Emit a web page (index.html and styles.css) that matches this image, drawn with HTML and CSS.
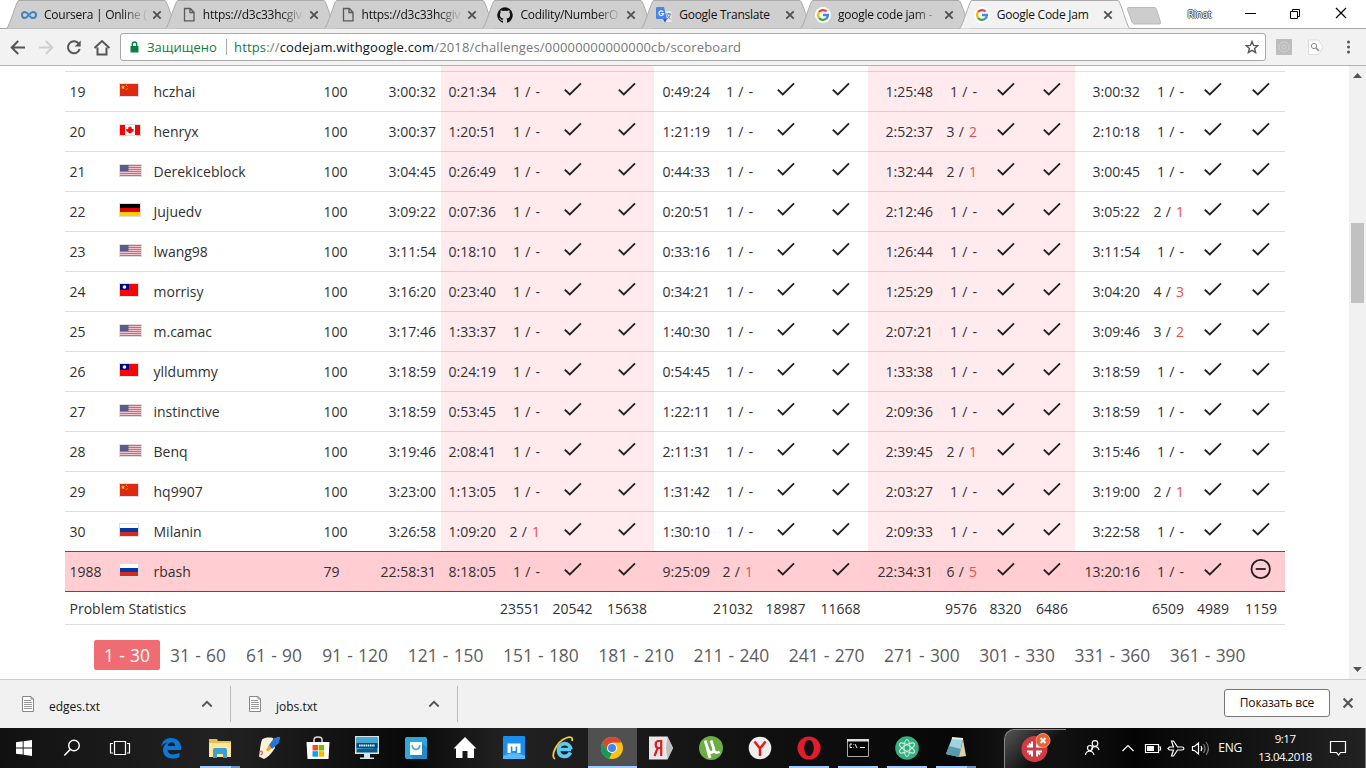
FILE: index.html
```html
<!DOCTYPE html>
<html lang="ru">
<head>
<meta charset="utf-8">
<title>Google Code Jam</title>
<link rel="stylesheet" href="styles.css">
</head>
<body>
<svg class="defs" aria-hidden="true">
  <defs>
    <symbol id="check" viewBox="0 0 24 24"><path d="M3.800 11.600l5 4.900L20 5.400" fill="none" stroke="currentColor" stroke-width="1.900"/></symbol>
    <symbol id="minus" viewBox="0 0 24 24"><circle cx="11.700" cy="11" r="9.200" fill="none" stroke="currentColor" stroke-width="1.800"/><path d="M6.700 11h10" stroke="currentColor" stroke-width="1.800"/></symbol>
    <symbol id="x" viewBox="0 0 10 10"><path d="M1.300 1.300l7.400 7.400M8.700 1.300L1.300 8.700" fill="none" stroke="currentColor" stroke-width="1.800"/></symbol>
    <symbol id="up" viewBox="0 0 12 8"><path d="M1.300 6.500L6 1.800l4.700 4.700" fill="none" stroke="currentColor" stroke-width="1.800"/></symbol>
    <symbol id="page" viewBox="0 0 16 16"><path d="M3.500 1.500h5.800l3.700 3.700v8.600H3.500zM9 1.500V5.500h4" fill="none" stroke="#5a5a5a" stroke-width="1.300"/></symbol>
    <symbol id="doc" viewBox="0 0 14 18"><path d="M1.500 1.500h8.500l2.500 2.500v12.500h-11z" fill="#fff" stroke="#888"/><path d="M10 1.500V4h2.500" fill="none" stroke="#888"/><path d="M3 5.500h7M3 7.500h8M3 9.500h8M3 11.500h8M3 13.500h8" stroke="#999" stroke-width="1"/></symbol>
    <symbol id="google" viewBox="0 0 16 16"><circle cx="8" cy="8" r="8" fill="#fff"/><g fill="none" stroke-width="2.300"><path d="M4 5.200A4.900 4.900 0 0 1 11.500 4.500" stroke="#ea4335"/><path d="M4 5.200A4.900 4.900 0 0 0 4 10.800" stroke="#fbbc05"/><path d="M4 10.800A4.900 4.900 0 0 0 11.200 11.700" stroke="#34a853"/><path d="M11.200 11.700A4.900 4.900 0 0 0 12.900 8H8" stroke="#4285f4"/></g></symbol>
    <symbol id="tabshape" viewBox="0 0 172 29" preserveAspectRatio="none"><path d="M.5 28.500C3.500 27 10 2 12.500.5H159C162 2 167 24 170.500 28.500" fill="currentColor" stroke="#aaa"/></symbol>
    <symbol id="cn" viewBox="0 0 18 12"><path fill="#de2910" d="M0 0h18v12H0z"/><path fill="#ffde00" d="M3 1.300l.6 1.200 1.400.1-1 1 .3 1.400L3 4.300l-1.300.7.3-1.400-1-1 1.400-.1zM6 .8h1v1H6zM7.300 2.300h.8v.8h-.8zM7.300 4h.8v.8h-.8zM6 5.200h.8V6H6z"/></symbol>
    <symbol id="ca" viewBox="0 0 20 10"><path fill="#fff" d="M0 0h20v10H0z"/><path fill="#f00" d="M0 0h5v10H0zM15 0h5v10h-5zM10 1l.9 1.600 1-.3-.2 1.700L14 4l-.7 1.300.4 1-2.200.9.100.7h-1.300V9h-.6V7.900H8.400l.1-.7-2.200-.9.4-1L6 4l2.300 0-.2-1.700 1 .3z"/></symbol>
    <symbol id="us" viewBox="0 0 21 11"><path fill="#f0c6cc" d="M0 0h21v11H0z"/><path d="M0 .5h21M0 2.500h21M0 4.500h21M0 6.500h21M0 8.500h21M0 10.500h21" stroke="#d0667a"/><path fill="#5b5b8d" d="M0 0h8.500v6H0z"/></symbol>
    <symbol id="de" viewBox="0 0 20 12"><path d="M0 0h20v4H0z"/><path fill="#d00" d="M0 4h20v4H0z"/><path fill="#ffce00" d="M0 8h20v4H0z"/></symbol>
    <symbol id="tw" viewBox="0 0 18 12"><path fill="#fe0000" d="M0 0h18v12H0z"/><path fill="#000095" d="M0 0h9v6H0z"/><circle cx="4.500" cy="3" r="1.800" fill="#fff"/></symbol>
    <symbol id="ru" viewBox="0 0 18 12"><path fill="#fff" d="M0 0h18v4H0z"/><path fill="#0039a6" d="M0 4h18v4H0z"/><path fill="#d52b1e" d="M0 8h18v4H0z"/></symbol>
  </defs>
</svg>

<div class="window">
  <header class="tabstrip">
    <div class="tab"><svg class="shape"><use href="#tabshape"/></svg>
      <svg class="favicon" viewBox="0 0 16 16"><path d="M8 8C6.500 6 5.500 4.900 4 4.900a3.100 3.100 0 0 0 0 6.200C6.500 11.100 9 4.900 12 4.900a3.100 3.100 0 0 1 0 6.200C10.500 11.100 9.500 10 8.600 8.800" fill="none" stroke="#3f85c6" stroke-width="2"/></svg>
      <span class="label fade">Coursera | Online (</span><svg class="close"><use href="#x"/></svg></div>
    <div class="tab"><svg class="shape"><use href="#tabshape"/></svg><svg class="favicon pg"><use href="#page"/></svg><span class="label fade">https://d3c33hcgiv</span><svg class="close"><use href="#x"/></svg></div>
    <div class="tab"><svg class="shape"><use href="#tabshape"/></svg><svg class="favicon pg"><use href="#page"/></svg><span class="label fade">https://d3c33hcgiv</span><svg class="close"><use href="#x"/></svg></div>
    <div class="tab"><svg class="shape"><use href="#tabshape"/></svg>
      <svg class="favicon" viewBox="0 0 16 16"><path fill="#111" d="M8 .2a8 8 0 0 0-2.500 15.500c.4.100.5-.1.500-.4v-1.600c-2.200.5-2.700-.9-2.700-.9-.4-1-1-1.200-1-1.200-.7-.5.1-.5.100-.5.800.1 1.200.8 1.200.8.700 1.200 1.900.9 2.400.7.100-.5.300-.9.500-1.100-1.800-.2-3.600-.9-3.600-4 0-.9.300-1.600.8-2.100-.1-.2-.4-1 .1-2.100 0 0 .7-.2 2.200.8a7.500 7.500 0 0 1 4 0c1.500-1 2.200-.8 2.200-.8.500 1.100.2 1.900.1 2.100.5.500.8 1.200.8 2.100 0 3.100-1.900 3.700-3.600 4 .3.200.5.700.5 1.500v2.300c0 .3.100.5.500.4A8 8 0 0 0 8 .2z"/></svg>
      <span class="label fade">Codility/NumberO</span><svg class="close"><use href="#x"/></svg></div>
    <div class="tab"><svg class="shape"><use href="#tabshape"/></svg>
      <svg class="favicon" viewBox="0 0 16 16"><path fill="#e8e8e8" d="M7 4h8.500v11H10z"/><path fill="#4a86e8" d="M1 0h7l3 12H1a1 1 0 0 1-1-1V1a1 1 0 0 1 1-1z"/><path fill="#2a56c6" d="M7 12h4l-2 3.500z"/><path d="M7.200 5A2.300 2.300 0 1 0 7.500 6.700H5.500" fill="none" stroke="#fff" stroke-width="1.200"/><path d="M10 7h5M12.500 6v1M11 12c2-1 3-3 3.200-5M11 8c1 2 2 3.300 3.500 4" fill="none" stroke="#5e83bf"/></svg>
      <span class="label">Google Translate</span><svg class="close"><use href="#x"/></svg></div>
    <div class="tab"><svg class="shape"><use href="#tabshape"/></svg><svg class="favicon"><use href="#google"/></svg><span class="label fade">google code jam -</span><svg class="close"><use href="#x"/></svg></div>
    <div class="tab active"><svg class="shape"><use href="#tabshape"/></svg><svg class="favicon"><use href="#google"/></svg><span class="label">Google Code Jam</span><svg class="close"><use href="#x"/></svg></div>
    <svg class="newtab" viewBox="0 0 36 18"><path d="M3 .5h25c1.500 0 2 .5 2.500 2l4 12.500c.5 1.500 0 2-1.500 2H9c-1.500 0-2.500-.5-3-2L1.500 2.500C1 1 1.500.5 3 .5z" fill="#cdcdcd" stroke="#b9b9b9"/></svg>
    <span class="user">Rinat</span>
    <svg class="winctl" viewBox="0 0 110 14"><path d="M1 6.500h11" stroke="#000"/><path d="M46.500 4.500h7v7h-7zM48.500 4.500v-2h7v7h-2" fill="none" stroke="#000"/><path d="M92 1l10 10M102 1L92 11" stroke="#000" stroke-width="1.200"/></svg>
  </header>

  <div class="toolbar">
    <svg class="nav" viewBox="0 0 112 37"><g fill="none" stroke="#555" stroke-width="2"><path d="M25 18.500H12M18.200 12L11.700 18.500l6.500 6.500"/><path d="M39 18.500h13M45.800 12l6.500 6.500-6.500 6.500" stroke="#cfcfcf"/><path d="M79 15a6 6 0 1 0 .7 5"/><path d="M94.500 19L102 12l7.500 7M97.500 18.500v7h9v-7"/></g><path fill="#555" d="M80.700 11.500v6h-6z"/></svg>
    <div class="omnibox">
      <svg class="lock" viewBox="0 0 9 12"><path fill="#0b8043" d="M0.500 5h8v6.500h-8z"/><path d="M2.300 5V3.200a2.200 2.200 0 0 1 4.400 0V5" fill="none" stroke="#0b8043" stroke-width="1.400"/></svg>
      <span class="secure">Защищено</span><i class="rule"></i>
      <span class="url"><b>https</b>://<em>codejam.withgoogle.com</em>/2018/challenges/00000000000000cb/scoreboard</span>
      <svg class="star" viewBox="0 0 14 14"><path d="M7 1.500l1.600 3.900 4.200.3-3.200 2.700 1 4.100L7 10.300l-3.600 2.200 1-4.100L1.200 5.700l4.200-.3z" fill="none" stroke="#555" stroke-width="1.400"/></svg>
    </div>
    <svg class="exts" viewBox="0 0 84 20"><path fill="#bdbdbd" d="M2 2h16v16H2z"/><circle cx="10" cy="10" r="5" fill="none" stroke="#d2d2d2"/><circle cx="10" cy="10" r="2" fill="none" stroke="#d2d2d2"/><path fill="#fff" stroke="#ddd" d="M34.500 3h10l4.500 7-4.500 7.500h-10z"/><circle cx="40" cy="9" r="2.600" fill="none" stroke="#888"/><path d="M42 11l3 3" stroke="#888" stroke-width="1.400"/><g fill="#555"><circle cx="74.500" cy="5" r="1.500"/><circle cx="74.500" cy="10" r="1.500"/><circle cx="74.500" cy="15" r="1.500"/></g></svg>
  </div>

  <main class="viewport">
    <div class="content">
      <div id="board" class="board"></div>
      <nav id="pager" class="pager"></nav>
    </div>
    <div class="scrollbar">
      <svg viewBox="0 0 9 5"><path d="M0 5L4.500 0 9 5z" fill="#555"/></svg>
      <i class="thumb"></i>
      <svg viewBox="0 0 9 5"><path d="M0 0h9L4.500 5z" fill="#555"/></svg>
    </div>
  </main>

  <div class="downloads">
    <div class="download"><svg class="doc"><use href="#doc"/></svg><span>edges.txt</span><svg class="chev"><use href="#up"/></svg></div>
    <div class="download second"><svg class="doc"><use href="#doc"/></svg><span>jobs.txt</span><svg class="chev"><use href="#up"/></svg></div>
    <button class="showall">Показать все</button>
    <svg class="dismiss"><use href="#x"/></svg>
  </div>

  <footer class="taskbar">
    <div class="sys"><svg viewBox="0 0 24 24"><path fill="#fff" d="M4 6.300l6.700-1v6.200H4zM11.600 5.200L20 4v7.500h-8.400zM4 12.400h6.700v6.200L4 17.700zM11.600 12.400H20V20l-8.400-1.200z"/></svg></div>
    <div class="sys"><svg viewBox="0 0 24 24"><circle cx="14" cy="9.500" r="5.300" fill="none" stroke="#fff" stroke-width="1.400"/><path d="M10.300 13.400L4.300 19.500" stroke="#fff" stroke-width="1.500"/></svg></div>
    <div class="sys"><svg viewBox="0 0 24 24"><path d="M6.500 5.500h11v13h-11zM5 7.500H2.500v9.500H5M19 7.500h2.500v9.500H19" fill="none" stroke="#fff" stroke-width="1.200"/></svg></div>
    <div class="app first"><svg viewBox="0 0 24 24"><path fill="#0b78d7" d="M2 11C3 5 7 2 12 2c6 0 10 4 10 9v3H8.500c.3 3 2.700 4.500 5.500 4.500 2.500 0 4.500-.5 6.500-1.700V21c-2 1-4.500 1.500-7 1.500C8 22.500 4 19 4 14c0-3.500 2-6.300 5-7.500-4 .3-6 2.500-7 4.500zm6.600-1h7.600c0-2-1.300-3.800-3.600-3.800S8.800 8 8.600 10z"/></svg></div>
    <div class="app open stacked"><svg viewBox="0 0 24 24"><path fill="#e8bf4c" d="M1 3h8l1 2h13v16H1z"/><path fill="#ffe69a" d="M1 7h22v14H1z"/><path fill="#3b9fd2" d="M5 22v-8a2 2 0 0 1 2-2h10a2 2 0 0 1 2 2v8h-4v-4H9v4z"/></svg></div>
    <div class="app"><svg viewBox="0 0 24 24"><path fill="#fff2da" d="M5 3.500C8 1.500 12 1 16 2l2 10C15 17 11 21 7 23l-5-2.500C3 15 3 9 5 3.500z"/><path fill="#f5a623" d="M9 14l3-5 4 2-5 4.500z"/><path fill="#ffd57a" d="M17 4l4-3 2 1-4 5z"/><path fill="#2775cf" d="M12 9l5-7 6-1-1 6-7 6z"/><path d="M2.500 16c3-3 4 2 1 3" fill="none" stroke="#e46262" stroke-width="1.300"/></svg></div>
    <div class="app"><svg viewBox="0 0 24 24"><path d="M8 6V3.500C8 0 16 0 16 3.500V6" fill="none" stroke="#ddd" stroke-width="1.500"/><path fill="#fff" d="M.5 6h23l-1 17h-21z"/><path fill="#f25022" d="M6.500 9H12v5.500H6.500z"/><path fill="#7fba00" d="M12.700 9h5.500v5.500h-5.500z"/><path fill="#00a4ef" d="M6.500 15.200H12v5.500H6.500z"/><path fill="#ffb900" d="M12.700 15.200h5.500v5.500h-5.500z"/></svg></div>
    <div class="app"><svg viewBox="0 0 24 24"><path fill="#d6e5e9" d="M0 0h24v18H0zM9 18h6v3.500h4V23H5v-1.500h4z"/><path fill="#075b89" d="M1.500 1.500h21v15h-21z"/><path fill="#45aad3" d="M1.500 1.500h21v10c-6 2-15 0-21 2z"/><path fill="#0c4774" d="M1.500 7h21v5h-21z"/><path d="M4 9.500h16" stroke="#ddf6fc" stroke-width="1.800" stroke-dasharray="1.600 .6"/></svg></div>
    <div class="app"><svg viewBox="0 0 24 24"><rect x="1" y="1" width="22" height="22" rx="2" fill="#2ca8dc"/><path fill="#1b8dc4" d="M18 7l5 5v11H10l-4-4z"/><path fill="#fff" d="M6 6h12v13H6z"/><path d="M8 9c1 6 7 6 8 0" fill="none" stroke="#55a9c8" stroke-width="1.600"/></svg></div>
    <div class="app"><svg viewBox="0 0 24 24"><path fill="#fff" d="M12 1l11.500 11.500H21V22h-6.500v-7h-5v7H3v-9.500H.5z"/></svg></div>
    <div class="app"><svg viewBox="0 0 24 24"><rect x="1" y="0" width="22" height="23" rx="1" fill="#198eef"/><path fill="#58b8ff" d="M1 20c7-4 15-4 22 0v3H1z"/><path d="M5.500 17V7.500h13V17h-3.300v-6.500h-1.600V15h-3.200v-4.500H8.800V17z" fill="#fff"/></svg></div>
    <div class="app"><svg viewBox="0 0 24 24"><path d="M20 13.500H8.500M19.500 16.500c-3 6-12 5-12-2.500 0-8 11-9 12.500-.5" fill="none" stroke="#5ccaf5" stroke-width="3.700"/><path d="M4 23C-1 21 5 6 15 2c5-2 7-.5 6 3" fill="none" stroke="#f3cb35" stroke-width="1.800"/></svg></div>
    <div class="app current"><svg viewBox="0 0 24 24"><circle cx="12" cy="12" r="11" fill="#fbc116"/><path fill="#db4437" d="M2.500 6.500a11 11 0 0 1 19 0H12L7.400 15z"/><path fill="#0f9d58" d="M2.500 6.500L7.400 15 12 17l-3 5.700A11 11 0 0 1 2.500 6.500z"/><circle cx="12" cy="12" r="5" fill="#fff"/><circle cx="12" cy="12" r="4" fill="#4285f4"/></svg></div>
    <div class="app"><svg viewBox="0 0 24 24"><path fill="#e8e8e8" d="M0 .5h18.500L24 12l-5.500 11.500H0z"/><path fill="#bdbdbd" d="M18.500.5L24 12l-5.500 11.500L17 12z"/><path d="M12.200 20V5H9.700c-4 0-4 7 0 7h2.500M8.700 12L5.500 20" fill="none" stroke="#e21b1b" stroke-width="2.200"/></svg></div>
    <div class="app"><svg viewBox="0 0 24 24"><circle cx="12" cy="12" r="12" fill="#6cae43"/><path d="M6 4.500l3 9c1.800 4.500 7 3.500 5.500-1.500L12 4.500M14.500 13c1 4 3.500 4.500 6 2.500M8 11.500L11 22" fill="none" stroke="#fff" stroke-width="2.800"/></svg></div>
    <div class="app"><svg viewBox="0 0 24 24"><circle cx="12" cy="12" r="11.300" fill="#eee"/><path d="M6.500 5.500L12 12.500l5.500-7M12 12v8" fill="none" stroke="#e21a1a" stroke-width="2.500"/></svg></div>
    <div class="app open"><svg viewBox="0 0 24 24"><ellipse cx="12" cy="12" rx="11.500" ry="11.500" fill="#e31b2c"/><ellipse cx="12" cy="12" rx="4.800" ry="8.300" fill="#111"/></svg></div>
    <div class="app open"><svg viewBox="0 0 24 24"><path fill="#050505" stroke="#aaa" d="M1.500 3.500h21v17h-21z"/><path fill="#ddd" d="M1 3h22v2.500H1z"/><path d="M6 8H4v3.500h2M7.500 8.500v.5m0 2v.5M9 8l2 4M14 11.500h5" fill="none" stroke="#eee"/></svg></div>
    <div class="app open"><svg viewBox="0 0 24 24"><circle cx="12" cy="12" r="11.800" fill="#37ad80"/><g fill="none" stroke="#c9f1df"><ellipse cx="12" cy="12" rx="3" ry="8.500"/><ellipse cx="12" cy="12" rx="3" ry="8.500" transform="rotate(60 12 12)"/><ellipse cx="12" cy="12" rx="3" ry="8.500" transform="rotate(-60 12 12)"/></g></svg></div>
    <div class="app open stacked"><svg viewBox="0 0 24 24"><path fill="#9fd3e0" d="M8 2l11 1-4 18-13-3z"/><path fill="#5799ad" d="M5 10l12 3-2 8-13-3z"/><path fill="#ddd2a5" d="M19 3l3 17-7 1z"/><path d="M8 2l11 1" stroke="#eee" stroke-width="2"/></svg></div>
    <div class="callout"><svg viewBox="0 0 30 30"><circle cx="13.500" cy="16" r="13" fill="#cf3c45"/><path d="M11 8.500v5H6M8 10.500l3 3M16 8.500v5h5M19 10.500l-3 3M11 23.500v-5H6M8 21.500l3-3M16 23.500v-5h5M19 21.500l-3-3" fill="none" stroke="#fff" stroke-width="2"/><circle cx="22" cy="7.500" r="7" fill="#eb6135" stroke="#f39a78"/><path d="M19.500 5l5 5M24.500 5l-5 5" stroke="#fff" stroke-width="2"/></svg></div>
    <svg class="tray" viewBox="0 0 140 40"><g fill="none" stroke="#fff" stroke-width="1.200"><circle cx="21" cy="15.500" r="2.800"/><path d="M17.500 22c.5-4.500 6.500-4.500 7.500 0"/><circle cx="16" cy="20" r="2.500"/><path d="M11.500 27c.5-5 7.500-5 8.500 0M48.500 23l5.500-5.500 5.500 5.500"/><path d="M71.500 16.500h13v8h-13zM85 19h1.500v3H85"/><path d="M94 20.500l1.500-1.500h4l-2-6h2l4 6h4.500c2.500 0 2.500 3 0 3h-4.500l-4 6h-2l2-6h-4z"/><path d="M118.500 18.500h2l4-3.500v11l-4-3.500h-2zM127 18c1 1.500 1 3.500 0 5"/><path d="M129.500 16c2 3 2 6 0 9M132 14c3 4 3 9 0 13" stroke="#777"/></g><path fill="#fff" d="M73 18h7v5h-7z"/></svg>
    <span class="lang">ENG</span>
    <div class="clock"><span>9:17</span><span>13.04.2018</span></div>
    <svg class="notify" viewBox="0 0 18 18"><path d="M1.500 2.500h15v11h-5L9.500 16l-2-2.500h-6z" fill="none" stroke="#fff" stroke-width="1.200"/></svg>
    <i class="edge"></i>
  </footer>
</div>
<script src="board.js"></script>
</body>
</html>
```
FILE: styles.css
```css
* { box-sizing: border-box; }
body { margin: 0; overflow: hidden; background: #fff; font-family: "Open Sans", "Noto Sans", sans-serif; color: #303030; }
svg { display: block; flex: none; }
.defs { position: absolute; width: 0; height: 0; }
.window { width: 1366px; height: 768px; display: flex; flex-direction: column; overflow: hidden; }

/* tabs */
.tabstrip { height: 28px; flex: none; display: flex; align-items: center; padding-left: 6px; background: #fff; position: relative; z-index: 1; }
.tab { position: relative; isolation: isolate; width: 158.8px; height: 28px; flex: none; display: flex; align-items: center; padding: 2px 4px 0 15px; color: #cfcfcf; }
.tab .shape { position: absolute; left: 0; top: 0; width: 172px; height: 29px; z-index: -1; }
.tab.active { color: #f2f2f2; }
.favicon { width: 16px; height: 16px; margin-right: 7px; }
.favicon.pg { margin: 0 6px 0 1px; }
.label { flex: 1; color: #111; font-size: 12px; letter-spacing: -.25px; line-height: 18px; white-space: nowrap; margin-right: 5px; }
.fade { -webkit-mask-image: linear-gradient(90deg, #000 76%, rgba(0,0,0,.15) 96%); mask-image: linear-gradient(90deg, #000 76%, rgba(0,0,0,.15) 96%); }
.close { width: 10px; height: 10px; color: #505050; }
.tab .close { margin-right: 1px; }
.newtab { width: 36px; height: 18px; margin: 3px 0 0 8px; }
.user { margin: 0 0 0 26px; width: 26px; font-size: 10.5px; letter-spacing: -.3px; color: #fff; text-shadow: 1px 0 #555, -1px 0 #555, 0 1px #555, 0 -1px #555; }
.winctl { width: 110px; height: 14px; margin-left: 30px; }

/* toolbar */
.toolbar { height: 38px; flex: none; display: flex; align-items: center; background: #f2f2f2; border-top: 1px solid #aaa; border-bottom: 1px solid #b3b3b3; }
.nav { width: 112px; height: 37px; }
.omnibox { margin-left: 8px; width: 1146px; height: 28px; display: flex; align-items: center; padding: 0 6px 0 9px; background: #fff; border: 1px solid #a9a9a9; border-radius: 3px; font-size: 13px; }
.lock { width: 9px; height: 12px; margin-right: 8px; }
.secure { color: #0b8043; width: 70px; white-space: nowrap; }
.rule { width: 1px; height: 16px; background: #aaa; margin: 0 7px 0 9px; }
.url { flex: 1; color: #777; letter-spacing: .16px; white-space: nowrap; }
.url b { font-weight: 400; color: #0b8043; }
.url em { font-style: normal; color: #111; }
.star { width: 14px; height: 14px; }
.exts { width: 84px; height: 20px; margin-left: 8px; }

/* page */
.viewport { height: 613px; flex: none; display: flex; overflow: hidden; }
.content { width: 1349px; padding-left: 65px; }
.board { width: 1220px; font-size: 14px; }
.row { display: grid; grid-template-columns: 49px 35px 170px 51px 71px 60px 44px 55px 54px 61px 43px 55px 55px 70px 44px 47px 46px 70px 44px 48px 48px; height: 40px; background: linear-gradient(90deg, transparent 376px, #ffebee 376px 589px, transparent 589px 803px, #ffebee 803px 1010px, transparent 1010px); border-bottom: 1px solid rgba(0,0,0,.13); }
.row.lead { height: 6px; }
.row.last { border-bottom-color: #555; }
.row.mine { background: #ffcdd2; border-bottom-color: #555; }
.row.stats { background: none; height: 33px; }
.row > span { display: flex; align-items: center; padding: 0 5px 0 4.500px; white-space: nowrap; }
.row .num { justify-content: flex-end; }
.row .tries { word-spacing: .8px; }
.row .mid { justify-content: center; padding: 0 0 4px; color: #212121; }
.row.stats .mid { padding: 0; color: inherit; }
.row .bad { font-style: normal; color: #e8504c; margin-left: 5px; }
.row .none { margin-left: 5px; }
.mark, .minus { width: 24px; height: 24px; }
.flag { border: 1px solid #ddd; margin-bottom: 3px; }
.wide2 { grid-column: span 6; }

.pager { display: flex; margin: 15px 0 0 29px; font-size: 17.4px; color: #5c5c5c; word-spacing: .7px; }
.pager span { height: 30px; display: flex; align-items: center; justify-content: center; border-radius: 2px; white-space: nowrap; }
.pager .s { width: 66px; background: #ef6c73; color: #fff; }
.pager .m { width: 76px; }
.pager .l { width: 86px; }
.pager .xl { width: 95.250px; }

.scrollbar { width: 17px; display: flex; flex-direction: column; align-items: center; justify-content: space-between; background: #f1f1f1; padding: 7px 0; }
.scrollbar svg { width: 9px; height: 5px; }
.thumb { width: 13px; height: 80px; background: #c1c1c1; margin-bottom: 220px; }

/* downloads */
.downloads { height: 49px; flex: none; display: flex; align-items: center; background: #f1f1f1; border-top: 1px solid #ccc; font-size: 12px; color: #111; }
.download { width: 231px; height: 36px; display: flex; align-items: center; padding: 4px 17px 0 21px; border-right: 1px solid #bbb; }
.download.second { width: 227px; padding-left: 17px; }
.doc { width: 14px; height: 18px; margin: 0 14px 5px 0; }
.download span { flex: 1; }
.chev { width: 12px; height: 8px; color: #555; margin-bottom: 4px; }
.showall { margin: 0 12px 3px auto; width: 106px; height: 28px; padding: 0; background: #fff; border: 1px solid #777; border-radius: 3px; font: 12px "Open Sans", "Noto Sans", sans-serif; letter-spacing: -.18px; color: #111; }
.dismiss { width: 12px; height: 12px; margin: 0 12px 2px 0; color: #555; }

/* taskbar */
.taskbar { height: 40px; flex: none; display: flex; background: linear-gradient(90deg, #111, #222 16%, #090909 30%, #222 37%, #111 55%, #070707 70%, #181818 75%, #050505 83%, #222); color: #fff; }
.sys, .app { width: 48px; flex: none; display: flex; align-items: center; justify-content: center; }
.sys svg, .app svg { width: 24px; height: 24px; }
.app { width: 49.060px; }
.first { margin-left: 2.500px; }
.open { background: linear-gradient(#9ecbff, #9ecbff) center bottom / 40px 2px no-repeat; }
.stacked { background-image: linear-gradient(90deg, #9ecbff 31px, #6f93bd 31px); }
.current { background: linear-gradient(#9ecbff, #9ecbff) center bottom / 100% 2px no-repeat #505050; }
.callout { width: 62px; flex: none; margin-left: 24px; border: solid #888; border-width: 1px 0 0 1px; border-radius: 10px 0 0 0; padding: 3px 0 0 16px; margin-top: 1px; background: linear-gradient(135deg, #555, #111 60%); }
.callout svg { width: 30px; height: 30px; }
.tray { width: 140px; height: 40px; margin-left: 8px; }
.lang { width: 30px; margin-left: 4px; font-size: 12px; line-height: 39px; letter-spacing: -.3px; }
.clock { width: 62px; margin-left: 6px; padding-top: 2px; display: flex; flex-direction: column; align-items: center; font-size: 11.500px; line-height: 18px; letter-spacing: -.5px; white-space: nowrap; }
.notify { width: 18px; height: 18px; margin: 11px 0 0 13px; }
.edge { width: 1px; background: #777; margin-left: 18px; }
```
FILE: board.js
```js
// Scoreboard rows: rank, flag, name, score, time, then [time, tries, wrong] per problem.
const rows = [
  [19, 'cn', 'hczhai', 100, '3:00:32', ['0:21:34', 1], ['0:49:24', 1], ['1:25:48', 1], ['3:00:32', 1]],
  [20, 'ca', 'henryx', 100, '3:00:37', ['1:20:51', 1], ['1:21:19', 1], ['2:52:37', 3, 2], ['2:10:18', 1]],
  [21, 'us', 'DerekIceblock', 100, '3:04:45', ['0:26:49', 1], ['0:44:33', 1], ['1:32:44', 2, 1], ['3:00:45', 1]],
  [22, 'de', 'Jujuedv', 100, '3:09:22', ['0:07:36', 1], ['0:20:51', 1], ['2:12:46', 1], ['3:05:22', 2, 1]],
  [23, 'us', 'lwang98', 100, '3:11:54', ['0:18:10', 1], ['0:33:16', 1], ['1:26:44', 1], ['3:11:54', 1]],
  [24, 'tw', 'morrisy', 100, '3:16:20', ['0:23:40', 1], ['0:34:21', 1], ['1:25:29', 1], ['3:04:20', 4, 3]],
  [25, 'us', 'm.camac', 100, '3:17:46', ['1:33:37', 1], ['1:40:30', 1], ['2:07:21', 1], ['3:09:46', 3, 2]],
  [26, 'tw', 'ylldummy', 100, '3:18:59', ['0:24:19', 1], ['0:54:45', 1], ['1:33:38', 1], ['3:18:59', 1]],
  [27, 'us', 'instinctive', 100, '3:18:59', ['0:53:45', 1], ['1:22:11', 1], ['2:09:36', 1], ['3:18:59', 1]],
  [28, 'us', 'Benq', 100, '3:19:46', ['2:08:41', 1], ['2:11:31', 1], ['2:39:45', 2, 1], ['3:15:46', 1]],
  [29, 'cn', 'hq9907', 100, '3:23:00', ['1:13:05', 1], ['1:31:42', 1], ['2:03:27', 1], ['3:19:00', 2, 1]],
  [30, 'ru', 'Milanin', 100, '3:26:58', ['1:09:20', 2, 1], ['1:30:10', 1], ['2:09:33', 1], ['3:22:58', 1]],
  [1988, 'ru', 'rbash', 79, '22:58:31', ['8:18:05', 1], ['9:25:09', 2, 1], ['22:34:31', 6, 5], ['13:20:16', 1]]
];
const flagSize = { cn: [20, 14], ca: [22, 12], us: [23, 13], de: [22, 14], tw: [20, 14], ru: [20, 14] };
const check = '<span class="mid"><svg class="mark"><use href="#check"/></svg></span>';
const partial = '<span class="mid"><svg class="minus"><use href="#minus"/></svg></span>';

let html = '<div class="row lead"></div>';
rows.forEach(([rank, flag, name, score, time, ...problems]) => {
  const [w, h] = flagSize[flag];
  const kind = rank === 1988 ? ' mine' : rank === 30 ? ' last' : '';
  html += `<div class="row${kind}"><span>${rank}</span><span><svg class="flag" width="${w}" height="${h}"><use href="#${flag}"/></svg></span><span>${name}</span><span>${score}</span><span class="num">${time}</span>`;
  problems.forEach(([t, tries, wrong], i) => {
    const tail = wrong ? `<i class="bad">${wrong}</i>` : '<b class="none" style="font-weight:400">-</b>';
    html += `<span class="num">${t}</span><span class="num tries">${tries} /${tail}</span>${check}${rank === 1988 && i === 3 ? partial : check}`;
  });
  html += '</div>';
});
const stats = [[23551, 20542, 15638], [21032, 18987, 11668], [9576, 8320, 6486], [6509, 4989, 1159]];
html += '<div class="row stats"><span class="wide2">Problem Statistics</span>';
stats.forEach(([a, b, c], i) => {
  html += `${i ? '<span></span>' : ''}<span class="num">${a}</span><span class="mid">${b}</span><span class="mid">${c}</span>`;
});
document.getElementById('board').innerHTML = html + '</div>';

let pages = '';
for (let i = 1; i <= 361; i += 30) {
  const size = i === 1 ? 's' : i < 91 ? 'm' : i === 91 ? 'l' : 'xl';
  pages += `<span class="${size}">${i} - ${i + 29}</span>`;
}
document.getElementById('pager').innerHTML = pages;
```
